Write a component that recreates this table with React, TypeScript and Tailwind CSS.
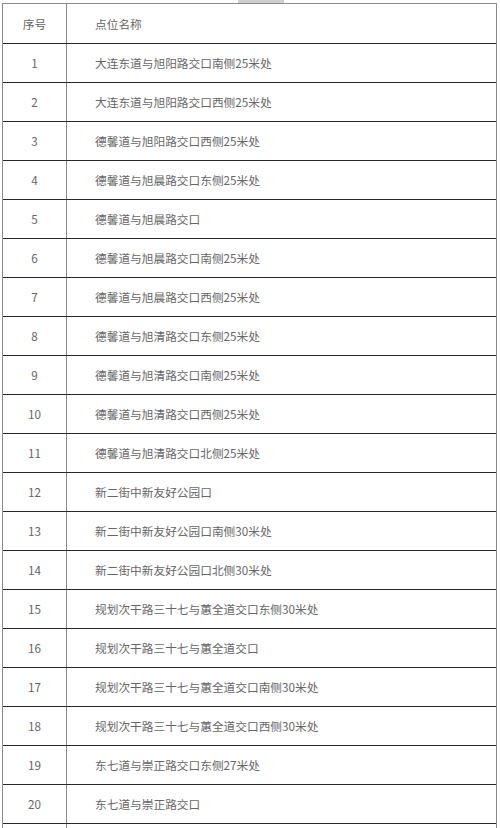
const rows: string[] = [
  '大连东道与旭阳路交口南侧25米处',
  '大连东道与旭阳路交口西侧25米处',
  '德馨道与旭阳路交口西侧25米处',
  '德馨道与旭晨路交口东侧25米处',
  '德馨道与旭晨路交口',
  '德馨道与旭晨路交口南侧25米处',
  '德馨道与旭晨路交口西侧25米处',
  '德馨道与旭清路交口东侧25米处',
  '德馨道与旭清路交口南侧25米处',
  '德馨道与旭清路交口西侧25米处',
  '德馨道与旭清路交口北侧25米处',
  '新二街中新友好公园口',
  '新二街中新友好公园口南侧30米处',
  '新二街中新友好公园口北侧30米处',
  '规划次干路三十七与蕙全道交口东侧30米处',
  '规划次干路三十七与蕙全道交口',
  '规划次干路三十七与蕙全道交口南侧30米处',
  '规划次干路三十七与蕙全道交口西侧30米处',
  '东七道与崇正路交口东侧27米处',
  '东七道与崇正路交口',
];

function Row({ no, name, header }: { no: string; name: string; header?: boolean }) {
  return (
    <div className={`flex border-b border-[#2a2a2a] ${header ? 'h-[40px]' : 'h-[39px]'}`}>
      <div className="w-[64px] shrink-0 flex items-center justify-center border-r border-[#8a8a8a]">
        {no}
      </div>
      <div className="flex-1 flex items-center pl-[28px]">{name}</div>
    </div>
  );
}

export default function App() {
  return (
    <div
      className="w-[500px] h-[828px] overflow-hidden bg-white text-[11.7px] text-[#666]"
      style={{ fontFamily: '"Noto Sans CJK SC", "Noto Sans", sans-serif' }}
    >
      <div className="ml-[238px] w-[46px] h-[3px] bg-[#d0d0d0]" />
      <div className="ml-[2px] w-[495px] border-t border-l border-r border-[#8a8a8a]">
        <Row no="序号" name="点位名称" header />
        {rows.map((name, i) => (
          <Row key={i} no={String(i + 1)} name={name} />
        ))}
        <Row no="" name="" />
      </div>
    </div>
  );
}
